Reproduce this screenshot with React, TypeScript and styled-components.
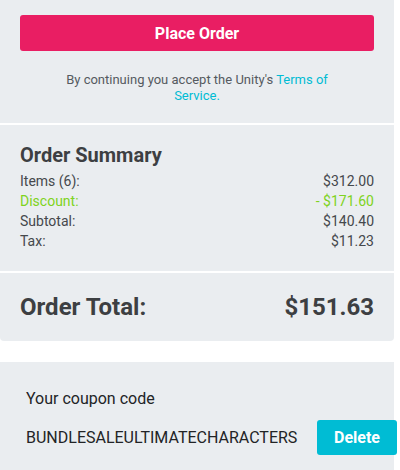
import React from "react";
import styled, { createGlobalStyle } from "styled-components";

const Global = createGlobalStyle`
  html, body { margin: 0; padding: 0; background: #ffffff; }
  body { font-family: Roboto, "Noto Sans", "Liberation Sans", sans-serif; }
  * { box-sizing: border-box; }
`;

const Page = styled.div`
  width: 394px;
  display: flex;
  flex-direction: column;
  gap: 21px;
`;

const Card = styled.div`
  background: #eaedf0;
  border-radius: 0 0 4px 4px;
  display: flex;
  flex-direction: column;
`;

const Section = styled.div<{ $pad: string }>`
  padding: ${(p) => p.$pad};
  display: flex;
  flex-direction: column;
`;

const Divider = styled.div`
  height: 2px;
  background: #ffffff;
`;

const PrimaryButton = styled.button`
  height: 36px;
  width: 100%;
  border: none;
  border-radius: 3px;
  background: #e91e63;
  color: #ffffff;
  font-family: Roboto, sans-serif;
  font-weight: 700;
  font-size: 16px;
  cursor: pointer;
`;

const Terms = styled.p`
  margin: 21px auto 0;
  max-width: 290px;
  text-align: center;
  font-size: 13px;
  line-height: 16px;
  color: #555a60;
`;

const Link = styled.a`
  color: #00bcd4;
  text-decoration: none;
`;

const Heading = styled.h2`
  margin: 0 0 4px;
  font-size: 20px;
  line-height: 24px;
  font-weight: 700;
  color: #3d3f42;
`;

const Row = styled.div<{ $tone?: "green" }>`
  display: flex;
  justify-content: space-between;
  font-size: 14px;
  line-height: 20px;
  color: ${(p) => (p.$tone === "green" ? "#7ed321" : "#45484c")};
`;

const TotalRow = styled.div`
  display: flex;
  justify-content: space-between;
  font-size: 24px;
  line-height: 30px;
  font-weight: 700;
  color: #3d3f42;
`;

const Coupon = styled.div`
  background: #eaedf0;
  padding: 27px 0 16px 26px;
  display: flex;
  flex-direction: column;
  gap: 11px;
`;

const CouponLabel = styled.div`
  font-size: 16px;
  line-height: 20px;
  color: #222426;
`;

const CouponRow = styled.div`
  display: flex;
  align-items: center;
  justify-content: space-between;
  margin-right: -3px;
`;

const CouponCode = styled.span`
  font-size: 16px;
  color: #222426;
`;

const DeleteButton = styled.button`
  width: 80px;
  height: 35px;
  border: none;
  border-radius: 3px;
  background: #00bcd4;
  color: #ffffff;
  font-family: Roboto, sans-serif;
  font-weight: 700;
  font-size: 16px;
  cursor: pointer;
`;

const rows: { label: string; value: string; tone?: "green" }[] = [
  { label: "Items (6):", value: "$312.00" },
  { label: "Discount:", value: "- $171.60", tone: "green" },
  { label: "Subtotal:", value: "$140.40" },
  { label: "Tax:", value: "$11.23" },
];

export default function App() {
  return (
    <>
      <Global />
      <Page>
        <Card>
          <Section $pad="15px 20px 19px">
            <PrimaryButton>Place Order</PrimaryButton>
            <Terms>
              By continuing you accept the Unity's <Link href="#">Terms of Service.</Link>
            </Terms>
          </Section>
          <Divider />
          <Section $pad="18px 20px 20px">
            <Heading>Order Summary</Heading>
            {rows.map((r) => (
              <Row key={r.label} $tone={r.tone}>
                <span>{r.label}</span>
                <span>{r.value}</span>
              </Row>
            ))}
          </Section>
          <Divider />
          <Section $pad="19px 20px 19px">
            <TotalRow>
              <span>Order Total:</span>
              <span>$151.63</span>
            </TotalRow>
          </Section>
        </Card>
        <Coupon>
          <CouponLabel>Your coupon code</CouponLabel>
          <CouponRow>
            <CouponCode>BUNDLESALEULTIMATECHARACTERS</CouponCode>
            <DeleteButton>Delete</DeleteButton>
          </CouponRow>
        </Coupon>
      </Page>
    </>
  );
}
